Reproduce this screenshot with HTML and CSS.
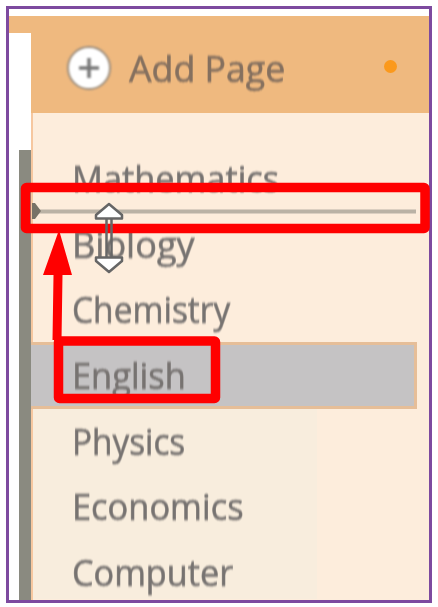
FILE: index.html
```html
<!DOCTYPE html>
<html lang="en">
<head>
<meta charset="utf-8">
<title>Pages</title>
<link rel="stylesheet" href="styles.css">
</head>
<body>
<main class="frame">
  <header class="header">
    <div class="header-tab"></div>
    <div class="add-page">
      <svg class="plus" viewBox="0 0 46 46"><circle cx="23" cy="23" r="21"/><path d="M13 23H33M23 13V33"/></svg>
      <span class="label add-label">Add Page</span>
      <i class="dot"></i>
    </div>
  </header>
  <div class="body">
    <div class="scrollbar"></div>
    <ul class="pages">
      <li><span class="label mathematics">Mathematics</span></li>
      <li><span class="label biology">Biology</span></li>
      <li><span class="label chemistry">Chemistry</span></li>
      <li class="selected"><span class="label english">English</span></li>
      <li><span class="label physics">Physics</span></li>
      <li><span class="label economics">Economics</span></li>
      <li><span class="label computer">Computer</span></li>
    </ul>
  </div>
</main>
<svg class="overlay" viewBox="0 0 438 607">
  <path class="drop-line" d="M36 211.5H416"/>
  <path class="drop-arrow" d="M32 203L35 203L41 211L35 219H32Z"/>
  <rect class="callout" x="25.5" y="187.5" width="399.500" height="41" rx="1"/>
  <path class="pointer" d="M59 230L72 275H62.5L61.5 340H52.5L53.5 275H43Z"/>
  <rect class="callout" x="58.5" y="341" width="157" height="57.500" rx="1"/>
  <path class="shaft" d="M106.500 218V258M111.500 218V258"/>
  <path class="cursor" d="M109 204L122 215V218.500H96V215ZM96 257.500H122V261L109 272L96 261Z"/>
</svg>
</body>
</html>
```
FILE: styles.css
```css
* { box-sizing: border-box; }
body {
  margin: 0;
  padding: 6px;
  background: #fff;
  font: 37px/66px "Open Sans", "Noto Sans", sans-serif;
  color: #777371;
}
.frame {
  width: 426px;
  height: 597px;
  padding-top: 7px;
  border: 3px solid #7d4a9f;
  overflow: hidden;
}
.header { display: flex; height: 97px; }
.header-tab { width: 22px; height: 17px; background: #efb97f; }
.add-page {
  flex: 1;
  display: flex;
  align-items: center;
  padding: 6px 32px 0 35px;
  background: #efb97f;
}
.plus { width: 46px; height: 46px; fill: #fff; stroke: #9b8d7d; stroke-width: 2; filter: blur(.8px); }
.plus path { stroke-width: 3.5; stroke: #777; }
.label {
  display: inline-block;
  transform-origin: left;
  white-space: nowrap;
  -webkit-text-stroke: .6px currentColor;
  filter: blur(.8px);
}
.add-label { margin-left: 17px; color: #85705f; transform: scaleX(.965); }
.mathematics { transform: scaleX(.928); }
.biology { transform: scaleX(.975); }
.chemistry { transform: scaleX(.905); }
.english { transform: scaleX(.93); }
.physics { transform: scaleX(.9); }
.economics { transform: scaleX(.93); }
.computer { transform: scaleX(.925); }
.dot { width: 13px; height: 13px; margin: -3px 0 0 auto; border-radius: 50%; background: #fb991c; filter: blur(.5px); }
.body { display: flex; height: 487px; }
.scrollbar { width: 12px; margin: 37px 0 0 10px; background: #8a8a80; }
.pages {
  flex: 1;
  margin: 0;
  padding: 32px 12px 0 0;
  list-style: none;
  border-left: 2px solid #f6c79f;
  background: linear-gradient(#f8eddd, #f8eddd) 0 296px / 284px 190px no-repeat #fdeddc;
}
.pages li { height: 65.700px; padding-left: 39px; }
.pages .selected {
  height: 67px;
  margin: 0 0 -1.300px -2px;
  padding-left: 41px;
  line-height: 59px;
  background: #c5c3c4;
  border: 3px solid #e6be98;
  border-left: 0;
}
.overlay { position: absolute; left: 0; top: 0; width: 438px; height: 607px; filter: blur(.6px); }
.callout { fill: none; stroke: #f00; stroke-width: 9.500; }
.pointer { fill: #f00; }
.drop-line { stroke: #bab2a5; stroke-width: 4; }
.drop-arrow { fill: #777267; }
.shaft { fill: none; stroke: #666; stroke-width: 2.500; }
.cursor { fill: #fff; stroke: #666; stroke-width: 2.500; stroke-linejoin: round; }
```
